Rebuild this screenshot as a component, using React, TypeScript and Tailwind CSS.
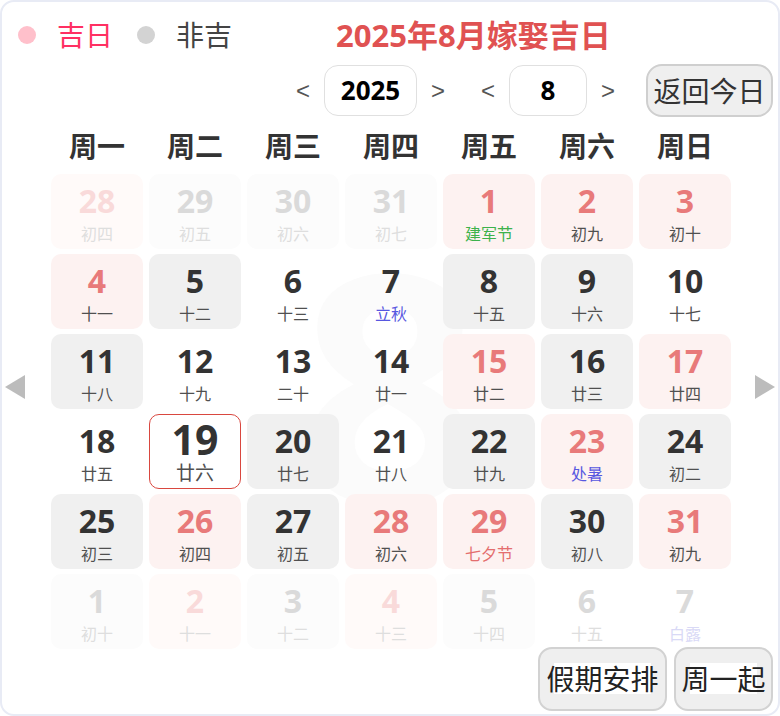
import React from 'react';

type Kind = 'pink' | 'gray' | 'white' | 'today' | 'fadeGray' | 'fadePink' | 'fadeNone';

interface Day {
  d: number;
  l: string;
  k: Kind;
  c?: string; // lunar/festival colour class
}

const GREEN = 'text-[#3db24c]';
const BLUE = 'text-[#5757e0]';
const RED = 'text-[#e46e6e]';
const FAINT_BLUE = 'text-[#d9d9f6]';

const days: Day[] = [
  { d: 28, l: '初四', k: 'fadePink' },
  { d: 29, l: '初五', k: 'fadeGray' },
  { d: 30, l: '初六', k: 'fadeGray' },
  { d: 31, l: '初七', k: 'fadeGray' },
  { d: 1, l: '建军节', k: 'pink', c: GREEN },
  { d: 2, l: '初九', k: 'pink' },
  { d: 3, l: '初十', k: 'pink' },

  { d: 4, l: '十一', k: 'pink' },
  { d: 5, l: '十二', k: 'gray' },
  { d: 6, l: '十三', k: 'white' },
  { d: 7, l: '立秋', k: 'white', c: BLUE },
  { d: 8, l: '十五', k: 'gray' },
  { d: 9, l: '十六', k: 'gray' },
  { d: 10, l: '十七', k: 'white' },

  { d: 11, l: '十八', k: 'gray' },
  { d: 12, l: '十九', k: 'white' },
  { d: 13, l: '二十', k: 'white' },
  { d: 14, l: '廿一', k: 'white' },
  { d: 15, l: '廿二', k: 'pink' },
  { d: 16, l: '廿三', k: 'gray' },
  { d: 17, l: '廿四', k: 'pink' },

  { d: 18, l: '廿五', k: 'white' },
  { d: 19, l: '廿六', k: 'today' },
  { d: 20, l: '廿七', k: 'gray' },
  { d: 21, l: '廿八', k: 'white' },
  { d: 22, l: '廿九', k: 'gray' },
  { d: 23, l: '处暑', k: 'pink', c: BLUE },
  { d: 24, l: '初二', k: 'gray' },

  { d: 25, l: '初三', k: 'gray' },
  { d: 26, l: '初四', k: 'pink' },
  { d: 27, l: '初五', k: 'gray' },
  { d: 28, l: '初六', k: 'pink' },
  { d: 29, l: '七夕节', k: 'pink', c: RED },
  { d: 30, l: '初八', k: 'gray' },
  { d: 31, l: '初九', k: 'pink' },

  { d: 1, l: '初十', k: 'fadeGray' },
  { d: 2, l: '十一', k: 'fadePink' },
  { d: 3, l: '十二', k: 'fadeGray' },
  { d: 4, l: '十三', k: 'fadePink' },
  { d: 5, l: '十四', k: 'fadeGray' },
  { d: 6, l: '十五', k: 'fadeNone' },
  { d: 7, l: '白露', k: 'fadeNone', c: FAINT_BLUE },
];

const weekdays = ['周一', '周二', '周三', '周四', '周五', '周六', '周日'];

const cellBg: Record<Kind, string> = {
  pink: 'bg-[#fdf2f1]',
  gray: 'bg-[#f0f0f0]',
  white: '',
  today: 'border-[1.5px] border-[#d9473f]',
  fadeGray: 'bg-[#fcfcfc]',
  fadePink: 'bg-[#fffaf9]',
  fadeNone: '',
};

const numColor: Record<Kind, string> = {
  pink: 'text-[#e87a7a]',
  gray: 'text-[#333]',
  white: 'text-[#333]',
  today: 'text-[#333]',
  fadeGray: 'text-[#dadada]',
  fadePink: 'text-[#f9dada]',
  fadeNone: 'text-[#dadada]',
};

const faded = (k: Kind) => k === 'fadeGray' || k === 'fadePink' || k === 'fadeNone';

function Cell({ day }: { day: Day }) {
  const isToday = day.k === 'today';
  const lunarColor = day.c ?? (faded(day.k) ? 'text-[#dedede]' : 'text-[#505050]');
  return (
    <div className={`h-[75px] rounded-[10px] flex flex-col items-center ${cellBg[day.k]}`}>
      {isToday ? (
        <>
          <span className={`mt-[1px] h-[46px] leading-[46px] text-[41px] font-bold ${numColor[day.k]}`}>{day.d}</span>
          <span className={`h-[22px] leading-[22px] text-[19px] ${lunarColor}`}>{day.l}</span>
        </>
      ) : (
        <>
          <span className={`mt-[6px] h-[42px] leading-[42px] text-[32px] font-bold ${numColor[day.k]}`}>{day.d}</span>
          <span className={`mt-[2px] h-[20px] leading-[20px] text-[16px] ${lunarColor}`}>{day.l}</span>
        </>
      )}
    </div>
  );
}

function Triangle({ dir }: { dir: 'left' | 'right' }) {
  return (
    <svg width="20" height="24" viewBox="0 0 20 24">
      {dir === 'left' ? <polygon points="20,0 20,24 0,12" fill="#bcbcbc" /> : <polygon points="0,0 0,24 20,12" fill="#bcbcbc" />}
    </svg>
  );
}

const arrowFont = { fontFamily: '"Liberation Sans", sans-serif' };

export default function App() {
  return (
    <div
      className="w-[780px] h-[716px] bg-white border-2 border-[#e8ebf5] rounded-[14px] relative overflow-hidden"
      style={{ fontFamily: '"Open Sans", "Noto Sans CJK SC", sans-serif' }}
    >
      {/* faint month watermark */}
      <div aria-hidden="true" className="absolute left-0 right-0 top-[198px] flex justify-center pointer-events-none select-none">
        <span className="text-[318px] leading-[360px] font-bold text-[#fbfbfb]">8</span>
      </div>

      <div className="relative flex flex-col">
        {/* legend + title */}
        <div className="flex items-center h-[36px] mt-[15px] pl-[16px]">
          <span className="w-[18px] h-[18px] rounded-full bg-[#ffc0cb]" />
          <span className="ml-[21px] text-[28px] leading-[36px] text-[#ff3062]">吉日</span>
          <span className="ml-[24px] w-[18px] h-[18px] rounded-full bg-[#d3d3d3]" />
          <span className="ml-[21px] text-[28px] leading-[36px] text-[#444]">非吉</span>
          <span className="ml-[104px] text-[31px] leading-[36px] font-bold text-[#e05252]">2025年8月嫁娶吉日</span>
        </div>

        {/* year / month controls */}
        <div className="flex items-center justify-end h-[53px] mt-[11px] pr-[5px]">
          <span className="w-[42px] text-center text-[24px] text-[#555]" style={arrowFont}>&lt;</span>
          <span className="w-[93px] h-[51px] rounded-[14px] border-[1.5px] border-[#e0e0e0] flex items-center justify-center text-[26px] font-bold text-black">2025</span>
          <span className="w-[42px] text-center text-[24px] text-[#555]" style={arrowFont}>&gt;</span>
          <span className="ml-[8px] w-[42px] text-center text-[24px] text-[#555]" style={arrowFont}>&lt;</span>
          <span className="w-[78px] h-[51px] rounded-[14px] border-[1.5px] border-[#e0e0e0] flex items-center justify-center text-[26px] font-bold text-black">8</span>
          <span className="w-[42px] text-center text-[24px] text-[#555]" style={arrowFont}>&gt;</span>
          <button className="ml-[17px] w-[127px] h-[53px] rounded-[16px] bg-[#efefef] border-2 border-[#cfcfcf] text-[28px] text-[#333] flex items-center justify-center">
            返回今日
          </button>
        </div>

        {/* calendar body */}
        <div className="flex">
          <div className="w-[49px] flex items-center pl-[3px] pt-[8px]">
            <Triangle dir="left" />
          </div>
          <div className="w-[680px] flex flex-col">
            <div className="grid grid-cols-7 gap-x-[6px] mt-[10px] h-[38px]">
              {weekdays.map((w) => (
                <span key={w} className="text-center text-[28px] leading-[38px] font-bold text-[#333]">
                  {w}
                </span>
              ))}
            </div>
            <div className="grid grid-cols-7 gap-x-[6px] gap-y-[5px] mt-[9px]">
              {days.map((day, i) => (
                <Cell key={i} day={day} />
              ))}
            </div>
          </div>
          <div className="flex-1 flex items-center justify-end pr-[3px] pt-[8px]">
            <Triangle dir="right" />
          </div>
        </div>

        {/* bottom buttons */}
        <div className="flex justify-end gap-[7px] pr-[5px] -mt-[2px]">
          <button className="relative w-[129px] h-[64px] rounded-[14px] bg-[#efefef] border-2 border-[#d2d2d2] text-[28px] text-[#222] flex items-center justify-center">
            <span className="absolute left-[14px] right-[14px] top-[14px] h-[31px] bg-white" />
            <span className="relative">假期安排</span>
          </button>
          <button className="relative w-[99px] h-[64px] rounded-[14px] bg-[#efefef] border-2 border-[#d2d2d2] text-[28px] text-[#222] flex items-center justify-center">
            <span className="absolute left-[14px] right-[14px] top-[14px] h-[31px] bg-white" />
            <span className="relative">周一起</span>
          </button>
        </div>
      </div>
    </div>
  );
}
